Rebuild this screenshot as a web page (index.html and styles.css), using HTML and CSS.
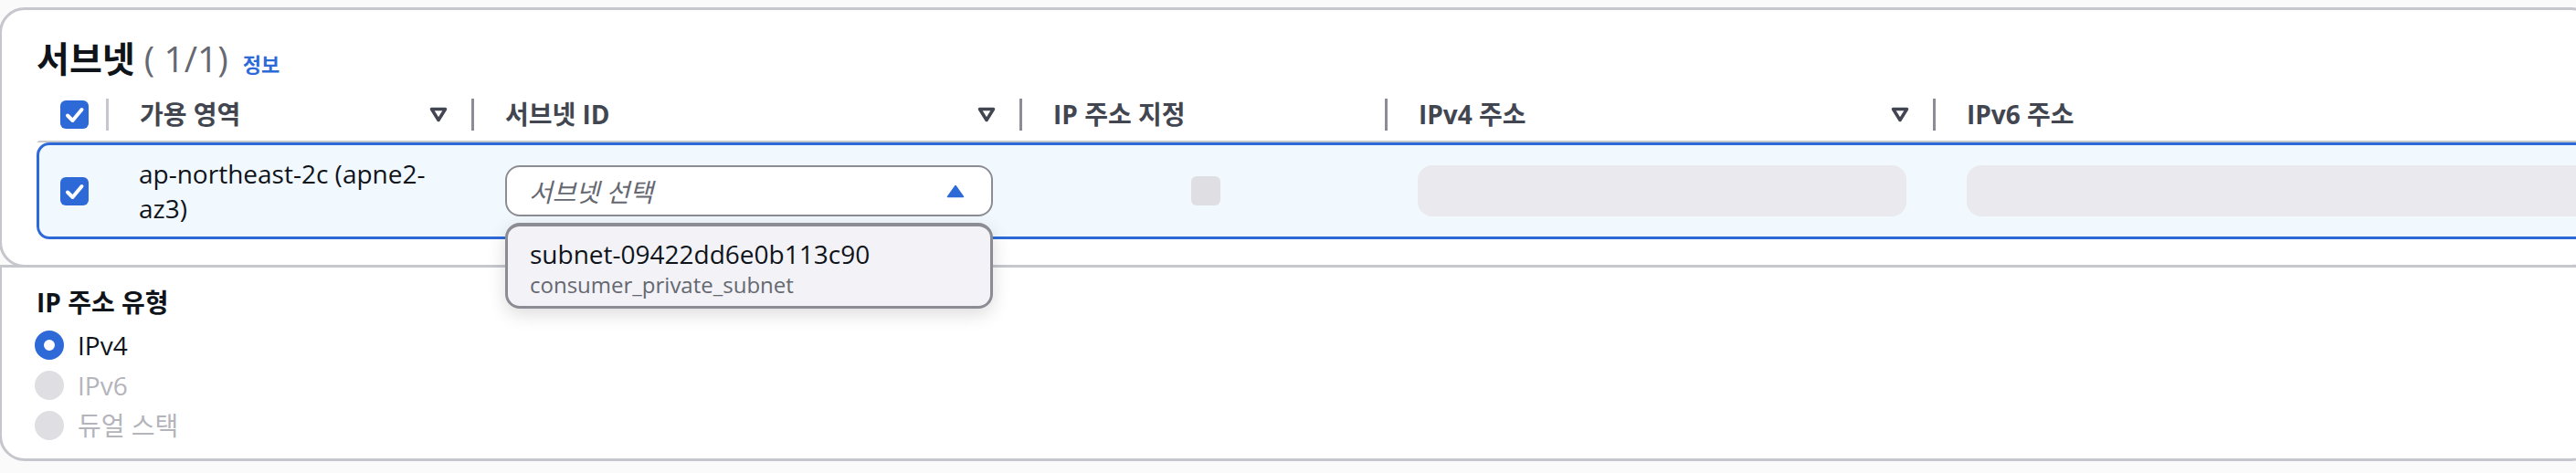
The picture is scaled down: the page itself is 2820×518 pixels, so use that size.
FILE: index.html
```html
<!DOCTYPE html>
<html lang="ko">
<head>
<meta charset="utf-8">
<title>서브넷</title>
<link rel="stylesheet" href="styles.css">
</head>
<body>
<div class="page">
  <section class="card card-table">
    <div class="head">
      <h2 class="title">서브넷 <span class="counter">( 1/1)</span></h2>
      <a class="info" href="#">정보</a>
    </div>
    <div class="table">
      <div class="thead">
        <div class="th th-check">
          <svg class="cb" viewBox="0 0 31 31" width="31" height="31"><rect width="31" height="31" rx="6" fill="#2d6ad8"/><path d="M8 16.5l5.5 5.5L23.5 10" fill="none" stroke="#fff" stroke-width="4" stroke-linecap="round" stroke-linejoin="round"/></svg>
        </div>
        <div class="th"><span class="sep light"></span><span class="th-label">가용 영역</span><svg class="sort" viewBox="0 0 20 17" width="20" height="17"><path d="M2.5 2.5h15L10 14.5z" fill="none" stroke="#424650" stroke-width="3.5" stroke-linejoin="round"/></svg></div>
        <div class="th"><span class="sep"></span><span class="th-label">서브넷 ID</span><svg class="sort" viewBox="0 0 20 17" width="20" height="17"><path d="M2.5 2.5h15L10 14.5z" fill="none" stroke="#424650" stroke-width="3.5" stroke-linejoin="round"/></svg></div>
        <div class="th"><span class="sep"></span><span class="th-label">IP 주소 지정</span></div>
        <div class="th"><span class="sep"></span><span class="th-label">IPv4 주소</span><svg class="sort" viewBox="0 0 20 17" width="20" height="17"><path d="M2.5 2.5h15L10 14.5z" fill="none" stroke="#424650" stroke-width="3.5" stroke-linejoin="round"/></svg></div>
        <div class="th"><span class="sep"></span><span class="th-label">IPv6 주소</span></div>
      </div>
      <div class="tr">
        <div class="td td-check">
          <svg class="cb" viewBox="0 0 31 31" width="31" height="31"><rect width="31" height="31" rx="6" fill="#2d6ad8"/><path d="M8 16.5l5.5 5.5L23.5 10" fill="none" stroke="#fff" stroke-width="4" stroke-linecap="round" stroke-linejoin="round"/></svg>
        </div>
        <div class="td td-az">ap-northeast-2c (apne2-az3)</div>
        <div class="td td-subnet">
          <div class="select">
            <span class="placeholder">서브넷 선택</span>
            <svg class="caret" viewBox="0 0 20 15" width="20" height="15"><path d="M10 1.5L18.5 13.5H1.5z" fill="#2d6ad8" stroke="#2d6ad8" stroke-width="1.5" stroke-linejoin="round"/></svg>
          </div>
          <div class="dropdown">
            <div class="opt-main">subnet-09422dd6e0b113c90</div>
            <div class="opt-sub">consumer_private_subnet</div>
          </div>
        </div>
        <div class="td td-ipset"><span class="cb-disabled"></span></div>
        <div class="td td-v4"><span class="input-disabled"></span></div>
        <div class="td td-v6"><span class="input-disabled"></span></div>
      </div>
    </div>
  </section>
  <section class="card card-form">
    <div class="field-label">IP 주소 유형</div>
    <div class="radios">
      <div class="radio"><span class="dot on"></span><span>IPv4</span></div>
      <div class="radio disabled"><span class="dot"></span><span>IPv6</span></div>
      <div class="radio disabled"><span class="dot"></span><span>듀얼 스택</span></div>
    </div>
  </section>
</div>
</body>
</html>
```
FILE: styles.css
```css
* { box-sizing: border-box; margin: 0; padding: 0; }
html, body { overflow: hidden; }
body {
  width: 2820px;
  height: 518px;
  background: #fafafa;
  font-family: "Open Sans", "Noto Sans CJK KR", sans-serif;
  color: #0f141a;
}
.page { padding-top: 8px; }
.card {
  position: relative;
  width: 2844px;
  margin-left: -1px;
  background: #fff;
  border: 3px solid #c6c6cd;
}
.card-table {
  border-radius: 28px;
  padding: 30px 0 28px 38px;
  z-index: 2;
}
.card-form {
  margin-top: -3px;
  border-radius: 0 0 28px 28px;
  padding: 19px 0 14px 38px;
  z-index: 1;
}
.head {
  display: flex;
  align-items: baseline;
  gap: 16px;
  height: 46px;
}
.title {
  font-size: 39px;
  line-height: 46px;
  font-weight: 700;
  color: #0f141a;
}
.counter { font-weight: 400; color: #656871; }
.info {
  font-size: 22px;
  font-weight: 700;
  color: #2d6ad8;
  text-decoration: none;
}
.table { margin-top: 17px; }
.thead, .tr {
  display: grid;
  grid-template-columns: 73px 400px 600px 400px 600px 800px;
}
.thead {
  height: 52px;
  border-left: 3px solid transparent;
  border-bottom: 2px solid #c6c6cd;
}
.th {
  display: flex;
  align-items: center;
  height: 42px;
}
.th-check { padding-left: 23px; }
.sep {
  width: 3px;
  height: 35px;
  background: #8c8c94;
  margin-right: 34px;
  flex: none;
}
.sep.light { background: #c6c6cd; }
.th-label {
  flex: 1;
  font-size: 28px;
  line-height: 38px;
  font-weight: 700;
  color: #424650;
  white-space: nowrap;
}
.sort { margin-right: 26px; flex: none; display: block; }
.cb { display: block; flex: none; }
.tr {
  height: 106px;
  border: 3px solid #2d6ad8;
  border-radius: 14px;
  background: #f1f8fe;
}
.td {
  display: flex;
  align-items: center;
}
.td-check { padding-left: 23px; }
.td-az {
  padding: 0 34px 0 36px;
  font-size: 28px;
  line-height: 38px;
  color: #0f141a;
}
.td-subnet {
  position: relative;
  padding: 0 29px 0 37px;
}
.select {
  width: 100%;
  height: 56px;
  border: 2px solid #8c8c94;
  border-radius: 16px;
  background: #fff;
  display: flex;
  align-items: center;
  justify-content: space-between;
  padding: 0 29px 0 24px;
}
.placeholder {
  font-size: 28px;
  font-style: italic;
  color: #656871;
}
.caret { display: block; }
.dropdown {
  position: absolute;
  z-index: 10;
  top: 85px;
  left: 37px;
  width: 534px;
  border: 3px solid #8c8c94;
  border-top-width: 4px;
  border-radius: 16px;
  background: #f2f2f7;
  padding: 11px 24px 8px;
  box-shadow: 0 6px 20px rgba(0, 7, 22, 0.14);
}
.opt-main {
  font-size: 28px;
  line-height: 38px;
  color: #0f141a;
}
.opt-sub {
  font-size: 24px;
  line-height: 30px;
  color: #656871;
}
.td-ipset { justify-content: center; padding-left: 8px; }
.cb-disabled {
  width: 32px;
  height: 32px;
  border-radius: 6px;
  background: #dedee3;
}
.td-v4 { padding: 0 29px 0 36px; }
.td-v6 { padding-left: 37px; }
.input-disabled {
  display: block;
  width: 100%;
  height: 56px;
  border-radius: 16px;
  background: #e9e9ee;
}
.field-label {
  font-size: 28px;
  line-height: 38px;
  font-weight: 700;
}
.radios {
  margin-top: 6px;
  display: flex;
  flex-direction: column;
}
.radio {
  display: flex;
  align-items: center;
  gap: 15px;
  height: 44px;
  margin-left: -2px;
  font-size: 28px;
  line-height: 38px;
  color: #0f141a;
}
.radio.disabled { color: #b4b4bb; }
.dot {
  width: 32px;
  height: 32px;
  border-radius: 50%;
  background: #dedee3;
  flex: none;
}
.dot.on {
  background: #fff;
  border: 10px solid #2d6ad8;
}
```
